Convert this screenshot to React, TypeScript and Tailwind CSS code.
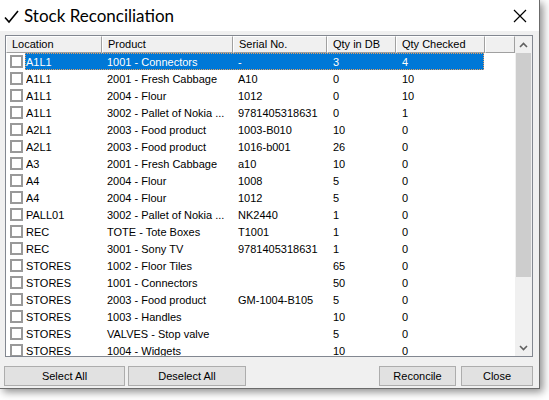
import React from 'react';

interface Item {
  location: string;
  product: string;
  serial: string;
  qtyDb: string;
  qtyChecked: string;
}

const items: Item[] = [
  { location: 'A1L1', product: '1001 - Connectors', serial: '-', qtyDb: '3', qtyChecked: '4' },
  { location: 'A1L1', product: '2001 - Fresh Cabbage', serial: 'A10', qtyDb: '0', qtyChecked: '10' },
  { location: 'A1L1', product: '2004 - Flour', serial: '1012', qtyDb: '0', qtyChecked: '10' },
  { location: 'A1L1', product: '3002 - Pallet of Nokia ...', serial: '9781405318631', qtyDb: '0', qtyChecked: '1' },
  { location: 'A2L1', product: '2003 - Food product', serial: '1003-B010', qtyDb: '10', qtyChecked: '0' },
  { location: 'A2L1', product: '2003 - Food product', serial: '1016-b001', qtyDb: '26', qtyChecked: '0' },
  { location: 'A3', product: '2001 - Fresh Cabbage', serial: 'a10', qtyDb: '10', qtyChecked: '0' },
  { location: 'A4', product: '2004 - Flour', serial: '1008', qtyDb: '5', qtyChecked: '0' },
  { location: 'A4', product: '2004 - Flour', serial: '1012', qtyDb: '5', qtyChecked: '0' },
  { location: 'PALL01', product: '3002 - Pallet of Nokia ...', serial: 'NK2440', qtyDb: '1', qtyChecked: '0' },
  { location: 'REC', product: 'TOTE - Tote Boxes', serial: 'T1001', qtyDb: '1', qtyChecked: '0' },
  { location: 'REC', product: '3001 - Sony TV', serial: '9781405318631', qtyDb: '1', qtyChecked: '0' },
  { location: 'STORES', product: '1002 - Floor Tiles', serial: '', qtyDb: '65', qtyChecked: '0' },
  { location: 'STORES', product: '1001 - Connectors', serial: '', qtyDb: '50', qtyChecked: '0' },
  { location: 'STORES', product: '2003 - Food product', serial: 'GM-1004-B105', qtyDb: '5', qtyChecked: '0' },
  { location: 'STORES', product: '1003 - Handles', serial: '', qtyDb: '10', qtyChecked: '0' },
  { location: 'STORES', product: 'VALVES - Stop valve', serial: '', qtyDb: '5', qtyChecked: '0' },
  { location: 'STORES', product: '1004 - Widgets', serial: '', qtyDb: '10', qtyChecked: '0' },
];

const headers = [
  { label: 'Location', w: 'w-[96px]' },
  { label: 'Product', w: 'w-[131px]' },
  { label: 'Serial No.', w: 'w-[94px]' },
  { label: 'Qty in DB', w: 'w-[69px]' },
  { label: 'Qty Checked', w: 'w-[89px]' },
  { label: '', w: 'w-[30px]' },
];

const Button: React.FC<{ label: string; className: string }> = ({ label, className }) => (
  <button className={`h-[20px] bg-[#e1e1e1] border border-[#adadad] text-[11px] text-black leading-none ${className}`}>
    {label}
  </button>
);

export default function App() {
  return (
    <div className="w-[549px] h-[400px] bg-white overflow-hidden" style={{ fontFamily: '"Liberation Sans", Arial, sans-serif' }}>
      <div className="w-[540px] h-[389px] flex flex-col bg-[#f0f0f0] border-r border-b border-[#6b6b6b] shadow-[3px_3px_8px_rgba(0,0,0,0.45)]">
        {/* title bar */}
        <div className="h-[31px] bg-white flex items-center justify-between pl-[4px] pr-[12px] shrink-0">
          <div className="flex items-center gap-[5px] text-[17px] text-black" style={{ fontFamily: 'Lato, sans-serif' }}>
            <svg width="15" height="14" viewBox="0 0 15 14" className="mt-[2px]">
              <path d="M1 7.5 L5 12 L14 1" fill="none" stroke="#000" strokeWidth="1.6" />
            </svg>
            <span>Stock Reconciliation</span>
          </div>
          <svg width="14" height="14" viewBox="0 0 14 14">
            <path d="M1 1 L13 13 M13 1 L1 13" stroke="#000" strokeWidth="1.2" />
          </svg>
        </div>

        {/* list view */}
        <div className="mt-[4px] ml-[5px] w-[528px] h-[322px] border border-[#828790] bg-white flex overflow-hidden">
          <div className="flex-1 flex flex-col overflow-hidden">
            <div className="flex h-[17px] shrink-0">
              {headers.map((h, i) => (
                <div
                  key={i}
                  className={`${h.w} h-[17px] bg-[#f0f0f0] border-t border-l border-t-white border-l-white border-r border-b border-r-[#a0a0a0] border-b-[#a0a0a0] pl-[5px] text-[11px] leading-[15px] text-black whitespace-nowrap overflow-hidden`}
                >
                  {h.label}
                </div>
              ))}
            </div>
            {items.map((it, i) => {
              const sel = i === 0;
              return (
                <div key={i} className="flex h-[17px] shrink-0 items-center text-[11px] leading-[17px] text-black whitespace-nowrap">
                  <div className="w-[19px] pl-[4px] flex items-center">
                    <div className="w-[13px] h-[13px] border-2 border-[#999999] bg-white" />
                  </div>
                  <div
                    className={`flex h-[17px] items-center pt-[1px] ${sel ? 'bg-[#0078d7] text-white border border-dotted border-[#e8a060]' : 'border border-transparent'}`}
                  >
                    <div className="w-[76px] overflow-hidden">{it.location}</div>
                    <div className="w-[131px] pl-[5px] overflow-hidden">{it.product}</div>
                    <div className="w-[94px] pl-[5px] overflow-hidden">{it.serial}</div>
                    <div className="w-[69px] pl-[6px] overflow-hidden">{it.qtyDb}</div>
                    <div className="w-[87px] pl-[6px] overflow-hidden">{it.qtyChecked}</div>
                  </div>
                </div>
              );
            })}
          </div>
          {/* scrollbar */}
          <div className="w-[17px] h-full bg-[#f0f0f0] flex flex-col shrink-0">
            <div className="h-[17px] flex items-center justify-center">
              <svg width="9" height="6" viewBox="0 0 9 6">
                <path d="M1 5 L4.5 1.5 L8 5" fill="none" stroke="#606060" strokeWidth="1.6" />
              </svg>
            </div>
            <div className="mx-[1px] h-[224px] bg-[#cdcdcd]" />
            <div className="flex-1" />
            <div className="h-[17px] flex items-center justify-center">
              <svg width="9" height="6" viewBox="0 0 9 6">
                <path d="M1 1 L4.5 4.5 L8 1" fill="none" stroke="#606060" strokeWidth="1.6" />
              </svg>
            </div>
          </div>
        </div>

        {/* buttons */}
        <div className="mt-[9px] flex items-center pl-[4px] pr-[6px]">
          <Button label="Select All" className="w-[121px]" />
          <Button label="Deselect All" className="ml-[3px] w-[118px]" />
          <div className="flex-1" />
          <Button label="Reconcile" className="w-[77px]" />
          <Button label="Close" className="ml-[5px] w-[72px]" />
        </div>
      </div>
    </div>
  );
}
